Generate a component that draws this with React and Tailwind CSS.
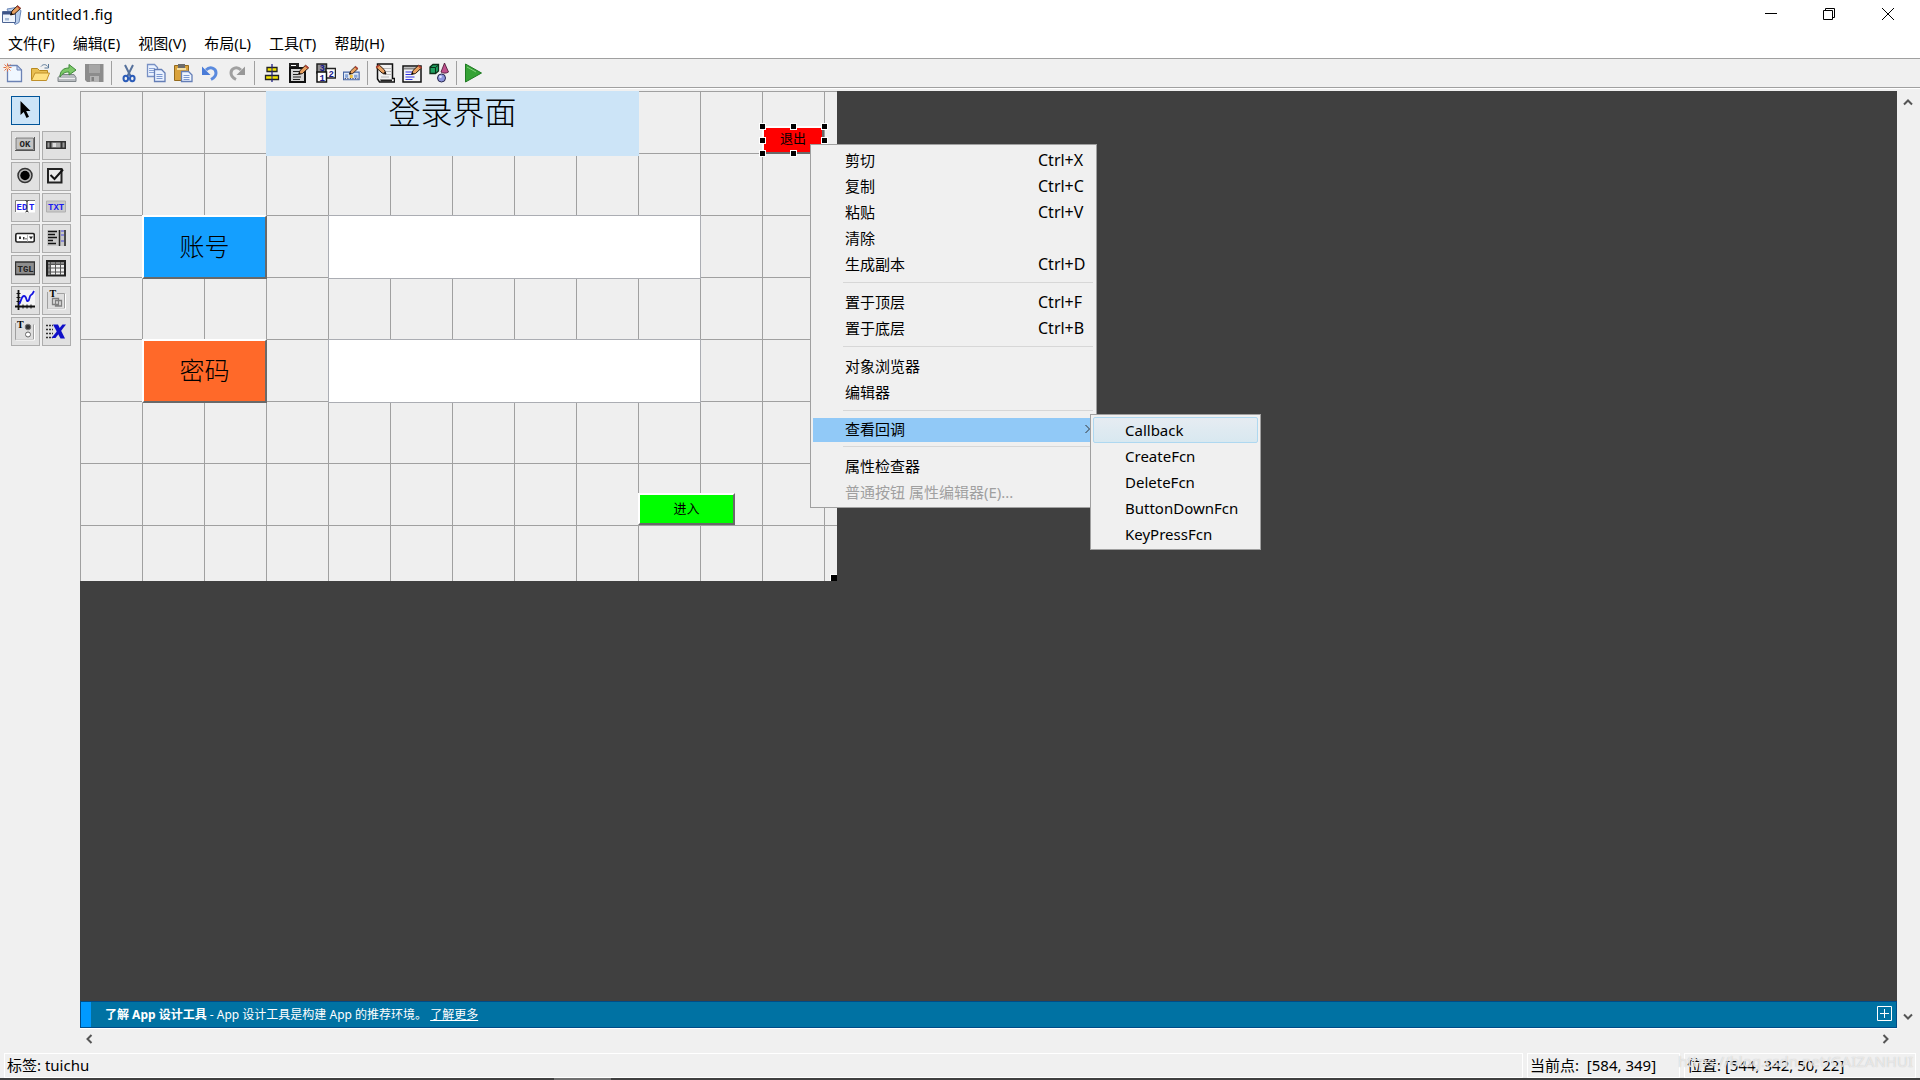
import React, { useState } from "react";

const Icon = ({ children, className = "w-5" }) => (
  <svg viewBox="0 0 20 20" className={`h-5 shrink-0 ${className}`} fill="none" aria-hidden="true">
    {children}
  </svg>
);

const Pencil = ({ x = 0, y = 0 }) => (
  <g transform={`translate(${x} ${y})`}>
    <path d="M0 10l1.5-4L7 .8l3 2.6L4 9z" fill="#e8a060" stroke="#2a1a10" strokeWidth="1" />
    <path d="M6.2 1.6L7.4.4l3 2.6-1.3 1.3z" fill="#b04030" />
    <path d="M0 10l.8-2.2L2.4 9z" fill="#000" />
  </g>
);

const toolbarGroups = [
  [
    {
      label: "新建",
      icon: (
        <Icon>
          <path d="M4.500 2.500h9.500l4.500 4.500V18.500h-14z" fill="#f0f7ff" stroke="#6c82b4" strokeWidth="1.300" />
          <path d="M14 2.500v4.500h4.500z" fill="#c4d6f2" stroke="#6c82b4" />
          <path d="M1.500 1.500l6 6M7.500 1.500l-6 6M4.500.500v8M.500 4.500h8" stroke="#e07048" />
          <circle cx="4.500" cy="4.500" r="1.500" fill="#ffd0a0" />
        </Icon>
      ),
    },
    {
      label: "打开",
      icon: (
        <Icon>
          <path d="M1.500 17V5.500h6l2 2h8V11" fill="#e9bf52" stroke="#b88a20" />
          <path d="M1.500 17.500L5 10h14.500l-3 7.500z" fill="#ffe182" stroke="#c0902a" />
          <path d="M11 3.500c2-2.500 5-2.500 6.500 0M18.500 1v4h-4" stroke="#5a7898" />
        </Icon>
      ),
    },
    {
      label: "导入",
      icon: (
        <Icon>
          <path d="M1 14.500l3-3h13l2 3v4H1z" fill="#b8bcc0" stroke="#80868a" />
          <path d="M2 15.500h16" stroke="#eee" />
          <path d="M3 14c0-6 3-9 9-9V1.500L19 7l-7 5V9c-4 0-6 1-9 5z" fill="#7cc868" stroke="#3f8a3a" />
        </Icon>
      ),
    },
    {
      label: "保存",
      icon: (
        <Icon>
          <path d="M1 1h18.500v18H3l-2-2z" fill="#8c8c8c" />
          <path d="M5 1.500h11V10H5z" fill="#a6a6a6" />
          <path d="M6 13h9v6H6z" fill="#b4b4b4" />
          <path d="M7.500 14h2.500v4H7.500z" fill="#808080" />
        </Icon>
      ),
    },
  ],
  [
    {
      label: "剪切",
      icon: (
        <Icon>
          <path d="M6 2l5.500 11M14 2L8.500 13" stroke="#56719c" strokeWidth="2" />
          <ellipse cx="6.800" cy="15.500" rx="2.300" ry="2.700" stroke="#2c5cb8" strokeWidth="2" />
          <ellipse cx="13.300" cy="15.500" rx="2.300" ry="2.700" stroke="#2c5cb8" strokeWidth="2" />
        </Icon>
      ),
    },
    {
      label: "复制",
      icon: (
        <Icon>
          <path d="M1.500 1.500h7l3 3v9h-10z" fill="#eaf2ff" stroke="#7890c4" strokeWidth="1.300" />
          <path d="M3 5.500h6M3 7.500h6M3 9.500h6" stroke="#8ca4d6" />
          <path d="M8.500 6.500h7l3.500 3.500v8.500H8.500z" fill="#eaf2ff" stroke="#647eb6" strokeWidth="1.300" />
          <path d="M10.500 11.500h6M10.500 13.500h6M10.500 15.500h6" stroke="#7c98d0" />
        </Icon>
      ),
    },
    {
      label: "粘贴",
      icon: (
        <Icon>
          <path d="M1.500 2.500h14v15h-14z" fill="#d9a23c" stroke="#946a1c" />
          <path d="M5 1h7v4H5z" fill="#6c6c6c" />
          <path d="M4 5h9v2H4z" fill="#f5dfa0" />
          <path d="M8.500 8.500h7l3.500 3.500v6.500H8.500z" fill="#eef5ff" stroke="#647eb6" strokeWidth="1.300" />
          <path d="M10.500 12.500h6M10.500 14.500h6M10.500 16.500h6" stroke="#7c98d0" />
        </Icon>
      ),
    },
    {
      label: "撤消",
      icon: (
        <Icon>
          <path d="M6 7c4-4 10-2 10 3 0 3-2 5-5 6.500" stroke="#5a8ade" strokeWidth="3" />
          <path d="M2 3.500v8.500h8.500z" fill="#4a7cd8" />
        </Icon>
      ),
    },
    {
      label: "重做",
      icon: (
        <Icon>
          <path d="M14 7C10 3 4 5 4 10c0 3 2 5 5 6.500" stroke="#a0a0a0" strokeWidth="3" />
          <path d="M18 3.500v8.500H9.500z" fill="#989898" />
        </Icon>
      ),
    },
  ],
  [
    {
      label: "对齐对象",
      icon: (
        <Icon>
          <path d="M10 1v18" stroke="#20208c" strokeWidth="1.300" />
          <path d="M5 4.500h10v4H5zM3.500 12.500h13v4h-13z" fill="#f5e400" stroke="#222" strokeWidth="1.300" />
          <path d="M10 4v5M10 12v5" stroke="#20208c" />
        </Icon>
      ),
    },
    {
      label: "菜单编辑器",
      icon: (
        <Icon>
          <path d="M0 0h10v5H0z" fill="#222" />
          <path d="M2 2.500h5" stroke="#fff" />
          <path d="M1 5h15v14H1z" fill="#d4d4d4" stroke="#111" strokeWidth="2" />
          <path d="M4 8.500h7M4 11.500h5M4 14h8M4 16.500h7" stroke="#222" />
          <Pencil x={9.500} y={1.500} />
        </Icon>
      ),
    },
    {
      label: "Tab 键顺序编辑器",
      icon: (
        <Icon>
          <path d="M1 1h9.500v9H1z" fill="#8f8f8f" stroke="#222" strokeWidth="1.500" />
          <path d="M10 5.500h9.500v9.500H10z" fill="#fff" stroke="#222" strokeWidth="1.500" />
          <path d="M1 9h9.500v10H1z" fill="#fff" stroke="#111" strokeWidth="1.500" />
          <g fill="#18188c" fontFamily="Liberation Mono" fontWeight="bold" fontSize="9">
            <text x="3.500" y="8">3</text>
            <text x="12.500" y="13.500">2</text>
            <text x="3.500" y="17.500">1</text>
          </g>
        </Icon>
      ),
    },
    {
      label: "工具栏编辑器",
      icon: (
        <Icon className="w-[17px]">
          <path d="M.500 9h18.500v9H.500z" fill="#dfe8f5" stroke="#4464a4" strokeWidth="1.300" />
          <path d="M2.500 11.500h3.500v4H2.500zM13 12h4v3.500h-4z" fill="#86a4d8" />
          <path d="M8 12h3.500v4H8z" fill="#f0c040" />
          <path d="M2 16.500h16" stroke="#335" strokeDasharray="1.500 1.500" />
          <Pencil x={7.500} y={1.500} />
        </Icon>
      ),
    },
  ],
  [
    {
      label: "编辑器",
      icon: (
        <Icon>
          <path d="M2.500 1h15v14.500h2V19h-15l-2-3z" fill="#f2f2f2" stroke="#111" strokeWidth="1.500" />
          <path d="M5 16.500h12v2H6z" fill="#222" />
          <path d="M8 5.500h8M9 8.500h7M8 11.500h8M6 14h8" stroke="#b8b8b8" />
          <g transform="translate(11 1) scale(-1 1)">
            <Pencil />
          </g>
        </Icon>
      ),
    },
    {
      label: "属性检查器",
      icon: (
        <Icon>
          <path d="M1 3h18v16H1z" fill="#f4f4f4" stroke="#111" strokeWidth="1.500" />
          <path d="M2 5.500h16" stroke="#888" strokeWidth="2" />
          <path d="M3.500 9h7M3.500 11.500h6M3.500 14h9M3.500 16.500h7" stroke="#3030e0" strokeWidth="1.200" />
          <Pencil x={9.500} y={1.500} />
        </Icon>
      ),
    },
    {
      label: "对象浏览器",
      icon: (
        <Icon>
          <path d="M1 4l3-2.500h5.500v6.500l-3 2.500H1z" fill="#1ea060" stroke="#0c3018" strokeWidth="1.300" />
          <path d="M1 4.500h5.500l3-2.500M6.500 4.500v6" stroke="#0c3018" />
          <path d="M15.500 0L19.500 9c-1.500 1.500-6 1.500-7.500 0z" fill="#c0508c" stroke="#40102c" strokeWidth=".8" />
          <circle cx="12.500" cy="15" r="4" fill="#8c94dc" stroke="#26264c" />
          <circle cx="11.500" cy="13.800" r="1.300" fill="#e0e4ff" />
        </Icon>
      ),
    },
  ],
  [
    {
      label: "运行",
      icon: (
        <Icon>
          <path d="M1.500 1l16 9-16 9z" fill="#35a235" stroke="#1f7a22" />
          <path d="M3 4l9 5" stroke="#7fd07a" />
        </Icon>
      ),
    },
  ],
];

const mono = { fontFamily: "Liberation Mono", fontWeight: "bold" };

const palette = [
  {
    label: "普通按钮",
    icon: (
      <Icon>
        <path d="M0 2h20v14H0z" fill="#555" />
        <path d="M0 2h19v13H0z" fill="#f4f4f4" />
        <path d="M1 3h17.500v11.500H1z" fill="#c4c4c4" stroke="#777" />
        <text x="4.500" y="12" fontSize="9" fill="#222" {...mono}>OK</text>
      </Icon>
    ),
  },
  {
    label: "滑块",
    icon: (
      <Icon>
        <path d="M0 6h20v8H0z" fill="#333" />
        <path d="M5.500 7.500h9v5h-9z" fill="#aaa" />
        <path d="M1.500 7.500h2v5h-2zM16.500 7.500h2v5h-2z" fill="#999" />
        <path d="M7 8h3v4H7z" fill="#ddd" />
      </Icon>
    ),
  },
  {
    label: "单选按钮",
    icon: (
      <Icon>
        <circle cx="10" cy="9.500" r="7" fill="#b8b8b8" stroke="#333" strokeWidth="1.500" />
        <circle cx="10" cy="9.500" r="4.700" fill="#000" />
      </Icon>
    ),
  },
  {
    label: "复选框",
    icon: (
      <Icon>
        <path d="M2 3h13.500v13.500H2z" fill="#e8e8e8" stroke="#222" strokeWidth="2" />
        <path d="M4.500 9l4 4L17 3.500" stroke="#111" strokeWidth="2" />
      </Icon>
    ),
  },
  {
    label: "可编辑文本",
    icon: (
      <Icon>
        <path d="M0 3h20v12.500H0z" fill="#fff" />
        <path d="M.500 15V3.500H20" stroke="#777" />
        <text x="1.500" y="12.500" fontSize="9" fill="#1a1af0" {...mono}>ED</text>
        <text x="14" y="12.500" fontSize="9" fill="#1a1af0" {...mono}>T</text>
        <path d="M10.500 3.500l1.500 1 1.500-1M12 4.500v10M10.500 15l1.500-1 1.500 1" stroke="#222" />
      </Icon>
    ),
  },
  {
    label: "静态文本",
    icon: (
      <Icon>
        <path d="M.500 4h19v11H.500z" fill="#cacaca" stroke="#b0b0b0" />
        <text x="2" y="12.500" fontSize="9" fill="#1a1af0" {...mono}>TXT</text>
      </Icon>
    ),
  },
  {
    label: "弹出式菜单",
    icon: (
      <Icon>
        <rect x=".8" y="5.500" width="18.500" height="8.500" rx="1.500" fill="#fff" stroke="#222" strokeWidth="1.600" />
        <path d="M4 8.500h2v2.500H4zM8 9h1.500v2.500H8zM10.500 10h1v1.500h-1z" fill="#333" />
        <path d="M12.500 6.500v7" stroke="#bbb" />
        <path d="M14 8.500h4l-2 3z" fill="#222" />
      </Icon>
    ),
  },
  {
    label: "列表框",
    icon: (
      <Icon>
        <path d="M1 2h19v16H1z" fill="#c8c8c8" />
        <path d="M2 3.500h9M2 6.500h7M2 9.500h9M2 12.500h5M2 15.500h8" stroke="#111" strokeWidth="1.500" />
        <path d="M13.500 2v16M19 2v16" stroke="#222" strokeWidth="1.500" />
        <path d="M15 3h3M15 7h3M15 13h3" stroke="#4a4ae0" />
      </Icon>
    ),
  },
  {
    label: "切换按钮",
    icon: (
      <Icon>
        <path d="M.500 3h19v12.500H.500z" fill="#8e8e8e" stroke="#333" strokeWidth="1.300" />
        <text x="2.500" y="12.500" fontSize="9" fill="#222" {...mono}>TGL</text>
      </Icon>
    ),
  },
  {
    label: "表",
    icon: (
      <Icon>
        <path d="M1 2h18v14.500H1z" fill="#f2f2f2" stroke="#222" strokeWidth="2" />
        <path d="M2 3h16v2H2zM2 5h2.500v11H2z" fill="#888" />
        <path d="M4.500 3v13M9.500 3v13M14.500 3v13M2 5.500h16M2 9h16M2 13h16" stroke="#555" />
      </Icon>
    ),
  },
  {
    label: "轴",
    icon: (
      <Icon>
        <path d="M3 0h17v17H3z" fill="#f6f6f6" />
        <path d="M3.500 0v20M0 16.500h20" stroke="#111" strokeWidth="1.800" />
        <path d="M1.500 3.500h4M1.500 7.500h4M1.500 11.500h4M8 14.500v4M12 14.500v4M16 14.500v4" stroke="#111" />
        <path d="M4 14c2-1 2-8 5-8s2 6 4 5 1-5 3-6 2-2 3-4" stroke="#1616e0" strokeWidth="1.800" />
      </Icon>
    ),
  },
  {
    label: "面板",
    icon: (
      <Icon>
        <path d="M1.500 2v16.500h17V3.500H11" fill="#dedede" stroke="#a0a0a0" />
        <path d="M2 19h17.500V4" stroke="#fff" />
        <text x="3.500" y="6.500" fontSize="10" fontWeight="bold" fontFamily="Liberation Serif" fill="#000">T</text>
        <path d="M6.500 8.500h6v6h-6zM9.500 10.500h6v5.500h-6z" stroke="#808080" strokeWidth="1.300" />
      </Icon>
    ),
  },
  {
    label: "按钮组",
    icon: (
      <Icon>
        <path d="M.500 2v16.500h18V3.500" fill="#dedede" stroke="#a0a0a0" />
        <path d="M1 19h18.500V4" stroke="#fff" />
        <text x="2" y="6.500" fontSize="10" fontWeight="bold" fontFamily="Liberation Serif" fill="#000">T</text>
        <circle cx="13" cy="6" r="2.800" fill="#333" stroke="#777" />
        <circle cx="13" cy="13.500" r="2.500" fill="#fff" stroke="#666" />
      </Icon>
    ),
  },
  {
    label: "ActiveX 控件",
    icon: (
      <Icon>
        <path d="M0 4.500h7M0 8.500h7M0 12.500h7M0 16.500h7" stroke="#333" strokeDasharray="2 1" strokeWidth="1.400" />
        <path d="M7 3.500h5l7 14h-4.500z" fill="#1010c8" />
        <path d="M20 3.500h-3.500L5.500 17h4z" fill="#1010c8" />
      </Icon>
    ),
  },
];

const menus = ["文件(F)", "编辑(E)", "视图(V)", "布局(L)", "工具(T)", "帮助(H)"];

const contextMenu = [
  [
    { text: "剪切", key: "Ctrl+X" },
    { text: "复制", key: "Ctrl+C" },
    { text: "粘贴", key: "Ctrl+V" },
    { text: "清除" },
    { text: "生成副本", key: "Ctrl+D" },
  ],
  [
    { text: "置于顶层", key: "Ctrl+F" },
    { text: "置于底层", key: "Ctrl+B" },
  ],
  [{ text: "对象浏览器" }, { text: "编辑器" }],
  [{ text: "查看回调", submenu: true }],
  [{ text: "属性检查器" }, { text: "普通按钮 属性编辑器(E)...", disabled: true }],
];

const callbacks = ["Callback", "CreateFcn", "DeleteFcn", "ButtonDownFcn", "KeyPressFcn"];

const bevel = "absolute flex items-center justify-center border-2 border-t-white border-l-white border-b-[#696969] border-r-[#696969] text-black";

const handles = [
  "-left-0.5 -top-0.5",
  "left-[29px] -top-0.5",
  "left-[60px] -top-0.5",
  "-left-0.5 top-3",
  "left-[60px] top-3",
  "-left-0.5 top-[25px]",
  "left-[29px] top-[25px]",
  "left-[60px] top-[25px]",
];

const Chevron = ({ d }) => (
  <svg viewBox="0 0 10 10" className="h-2.5 w-2.5" fill="none" aria-hidden="true">
    <path d={d} stroke="#555" strokeWidth="2" />
  </svg>
);

const TitleBar = () => (
  <div className="flex h-[30px] items-center">
    <svg viewBox="0 0 20 20" className="ml-0.5 h-5 w-5" fill="none" aria-hidden="true">
      <path d="M5 4l9-1.500L19 5.500l-2 12-4 2z" fill="#b8cdea" stroke="#6c88b8" />
      <path d="M.500 6.500h13v11H.500z" fill="#eef4fc" stroke="#4c6494" />
      <path d="M1 7h12v2.500H1z" fill="#3c5488" />
      <path d="M3 13h4v2.500H3z" fill="#a8bcd8" />
      <Pencil x={8.500} y={0} />
    </svg>
    <h1 className="ml-[5px] flex-1 pb-0.5">untitled1.fig</h1>
    <button aria-label="最小化" className="flex h-full w-[58px] items-center justify-center pb-0.5">
      <svg viewBox="0 0 12 12" className="h-3 w-3" fill="none"><path d="M0 5.500h12" stroke="#000" /></svg>
    </button>
    <button aria-label="还原" className="flex h-full w-[58px] items-center justify-center pb-0.5">
      <svg viewBox="0 0 12 12" className="h-3 w-3" fill="none">
        <path d="M.500 2.500h9v9h-9zM2.500 2.500v-2h9v9h-2" stroke="#000" />
      </svg>
    </button>
    <button aria-label="关闭" className="mr-0.5 flex h-full w-[60px] items-center justify-center pb-0.5">
      <svg viewBox="0 0 12 12" className="h-3 w-3" fill="none"><path d="M0 0l12 12M12 0L0 12" stroke="#000" /></svg>
    </button>
  </div>
);

const Palette = () => {
  const base = "flex h-[29px] w-[29px] items-center justify-center border pr-px pb-px";
  return (
    <aside className="w-20 shrink-0 pl-[11px] pt-[7px]">
      <button aria-label="选择" className={`${base} border-[#005499] bg-[#cce4f7]`}>
        <Icon>
          <path d="M5.500 1v14l3.200-3 2.800 6 2.500-1.200-2.800-5.800h4.300z" fill="#000" />
        </Icon>
      </button>
      <div className="mt-1.5 flex flex-wrap gap-0.5">
        {palette.map((item) => (
          <button key={item.label} aria-label={item.label} className={`${base} border-[#adadad] bg-[#e1e1e1]`}>
            {item.icon}
          </button>
        ))}
      </div>
    </aside>
  );
};

const ContextMenu = () => (
  <div className="absolute left-[730px] top-[53px] w-[287px] border border-[#a0a0a0] bg-[#f0f0f0] px-0.5 pb-px pt-[3px]">
    {contextMenu.map((group, i) => (
      <React.Fragment key={i}>
        {i > 0 && (
          <div className="h-3 pl-[30px] pr-px pt-1">
            <div className="h-px bg-[#d7d7d7]"></div>
          </div>
        )}
        {group.map((item) => (
          <button
            key={item.text}
            disabled={item.disabled}
            className={`flex w-full items-center pb-0.5 pl-8 text-left ${item.submenu ? "h-6 bg-[#91c9f7]" : "h-[26px]"} ${item.disabled ? "text-[#a0a0a0]" : ""}`}
          >
            <span className="flex-1">{item.text}</span>
            {item.key && <span className="w-[56px] text-base">{item.key}</span>}
            {item.submenu && (
              <svg viewBox="0 0 10 10" className="h-2.5 w-2.5" fill="none" aria-hidden="true">
                <path d="M1.500 1l4 4-4 4" stroke="#333" />
              </svg>
            )}
          </button>
        ))}
      </React.Fragment>
    ))}
  </div>
);

const Submenu = ({ active, onActive }) => (
  <div className="absolute left-[1010px] top-[323px] w-[171px] border border-[#a0a0a0] bg-[#f0f0f0] px-0.5 py-[2px]">
    {callbacks.map((name) => (
      <button
        key={name}
        onMouseEnter={() => onActive(name)}
        className={`flex h-[26px] w-full items-center rounded-xs border pl-[31px] text-left ${active === name ? "border-[#aed8f0] bg-linear-to-b from-[#e6ecf2] to-[#d8e8f0]" : "border-transparent"}`}
      >
        {name}
      </button>
    ))}
  </div>
);

const Figure = () => (
  <div className="relative h-[490px] w-[757px] bg-[#efefef] bg-[linear-gradient(#a0a0a0_1px,transparent_1px),linear-gradient(90deg,#a0a0a0_1px,transparent_1px)] bg-[size:62px_62px] font-['Noto_Sans_CJK_SC',sans-serif]">
    <div className="absolute left-[186px] top-0 h-[65px] w-[373px] bg-[#cce4f7] text-center text-[32px] font-light leading-[38px]">
      登录界面
    </div>
    <button className={`${bevel} left-[62px] top-[124px] h-16 w-[125px] bg-[#149fff] pb-0.5 text-[25px] font-light`}>账号</button>
    <input aria-label="账号" className="absolute left-[248px] top-[124px] h-16 w-[373px] border border-[#abadb3] bg-white px-2" />
    <button className={`${bevel} left-[62px] top-[248px] h-16 w-[125px] bg-[#ff6929] pb-0.5 text-[25px] font-light`}>密码</button>
    <input aria-label="密码" type="password" className="absolute left-[248px] top-[248px] h-16 w-[373px] border border-[#abadb3] bg-white px-2" />
    <button className={`${bevel} left-[558px] top-[402px] h-8 w-[97px] bg-[#00ff00] pb-0.5 text-[13px]`}>进入</button>
    <div className="absolute left-[682px] top-[35px] h-7 w-[62px]">
      <button className={`${bevel} inset-0 bg-[#ff0000] pb-1 text-[13px]`}>退出</button>
      {handles.map((pos) => (
        <span key={pos} className={`absolute h-[5px] w-[5px] bg-black outline outline-white ${pos}`}></span>
      ))}
    </div>
    <span className="absolute bottom-0 right-0 h-[7px] w-[7px] border-l border-t border-white bg-black"></span>
  </div>
);

const StatusBar = () => (
  <footer className="flex gap-1 px-1">
    <div className="h-[25px] flex-1 border border-white pl-0.5 leading-[22px]">标签: tuichu</div>
    <div className="h-[25px] w-[153px] whitespace-pre border border-white pl-0.5 leading-[22px]">当前点:  [584, 349]</div>
    <div className="relative h-[25px] w-[232px] border border-white pl-0.5 leading-[22px]">
      位置: [544, 342, 50, 22]
      <span className="absolute -top-1 right-0.5 text-[15px] text-white/60 [text-shadow:0_0_1px_#bbb]">
        https://blog.csdn.net/GAIZANHUI
      </span>
    </div>
  </footer>
);

const App = () => {
  const [active, setActive] = useState("Callback");

  return (
    <div className="flex h-screen flex-col overflow-hidden bg-[#f0f0f0] font-['Noto_Sans','Noto_Sans_CJK_SC',sans-serif] text-[15px] text-black">
      <header className="h-[58px] bg-white">
        <TitleBar />
        <nav className="flex h-[28px] items-center gap-[18px] pb-0.5 pl-2">
          {menus.map((menu) => (
            <button key={menu}>{menu}</button>
          ))}
        </nav>
      </header>
      <div className="flex h-[30px] items-center gap-[7px] border-y border-[#a0a0a0] pl-[3px]">
        {toolbarGroups.map((group, i) => (
          <React.Fragment key={i}>
            {i > 0 && <span className="h-6 w-px bg-[#a0a0a0]"></span>}
            {group.map((item) => (
              <button key={item.label} aria-label={item.label}>{item.icon}</button>
            ))}
          </React.Fragment>
        ))}
      </div>
      <div className="flex min-h-0 flex-1 border-t border-white">
        <Palette />
        <main className="mt-0.5 flex min-w-0 flex-1 flex-col">
          <div className="relative min-h-0 flex-1 bg-[#404040]">
            <Figure />
            <ContextMenu />
            <Submenu active={active} onActive={setActive} />
          </div>
          <div className="flex h-[27px] items-center border border-[#004b87] bg-[#0072a3] text-xs text-white">
            <span className="h-full w-2.5 bg-[#0099ff]"></span>
            <p className="ml-3.5 flex-1">
              <b>了解 App 设计工具</b> - App 设计工具是构建 App 的推荐环境。{" "}
              <a href="#app-designer" className="underline">了解更多</a>
            </p>
            <button aria-label="展开" className="mb-0.5 mr-1">
              <svg viewBox="0 0 15 15" className="h-[15px] w-[15px]" fill="none">
                <path d="M.500.500h14v14H.500zM3 7.500h9M7.500 3v9" stroke="#fff" />
              </svg>
            </button>
          </div>
          <div className="flex h-[25px] items-center justify-between border-t border-white pb-1 pl-1 pr-1.5">
            <button aria-label="向左滚动"><Chevron d="M7.500 1l-4 4 4 4" /></button>
            <button aria-label="向右滚动"><Chevron d="M2.500 1l4 4-4 4" /></button>
          </div>
        </main>
        <div className="flex w-[23px] shrink-0 flex-col items-center justify-between pb-[31px] pt-2 pr-0.5">
          <button aria-label="向上滚动"><Chevron d="M1 7.500l4-4 4 4" /></button>
          <button aria-label="向下滚动"><Chevron d="M1 2.500l4 4 4-4" /></button>
        </div>
      </div>
      <StatusBar />
      <div className="h-0.5 bg-[#404040] pl-[554px]">
        <div className="h-full w-[57px] bg-[#707070]"></div>
      </div>
    </div>
  );
};

export default App;
